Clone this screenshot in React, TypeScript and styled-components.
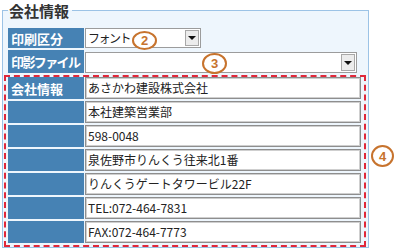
import styled, { createGlobalStyle } from "styled-components";

const colors = {
  frame: "#9cc3e6",
  frameBg: "#eef6fd",
  label: "#4682b4",
  box: "#9c9c9c",
  mark: "#c7732d",
  dash: "#e0283a",
  text: "#222",
};

const GlobalStyle = createGlobalStyle`
  html, body { margin: 0; padding: 0; background: #fff; }
  body { font-family: "Noto Sans CJK JP", "Noto Sans", sans-serif; }
`;

const Page = styled.div`
  display: flex;
  align-items: flex-start;
  width: 397px;
  height: 249px;
`;

const Frame = styled.fieldset`
  box-sizing: border-box;
  width: 367px;
  height: 246px;
  min-width: 0;
  margin: 2px 0 0 2px;
  padding: 9px 7px 0 5px;
  border: 1px solid ${colors.frame};
  background: ${colors.frameBg};
`;

const Legend = styled.legend`
  padding: 0 3px 0 1px;
  font: bold 15px/17px "Noto Sans CJK JP", sans-serif;
  color: #333;
`;

const Table = styled.div`
  display: flex;
  flex-direction: column;
  gap: 2px;
`;

const Row = styled.div<{ $h: number }>`
  display: flex;
  gap: 1px;
  height: ${(p) => p.$h}px;
`;

const Label = styled.div<{ $tight?: boolean }>`
  box-sizing: border-box;
  flex: none;
  width: 76px;
  display: flex;
  align-items: center;
  padding-left: 3px;
  background: ${colors.label};
  color: #fff;
  font: bold 13px/1 "Noto Sans CJK JP", sans-serif;
  white-space: nowrap;
  overflow: hidden;
  letter-spacing: ${(p) => (p.$tight ? "-1.6px" : "0")};
`;

const Value = styled.div<{ $align?: string }>`
  position: relative;
  flex: 1;
  display: flex;
  align-items: ${(p) => p.$align || "stretch"};
`;

const Select = styled.div<{ $w: number; $h: number }>`
  box-sizing: border-box;
  width: ${(p) => p.$w}px;
  height: ${(p) => p.$h}px;
  display: flex;
  align-items: center;
  padding: 0 1px 0 2px;
  background: #fff;
  border: 1px solid ${colors.box};
  font: 12px/1 "Noto Sans CJK JP", sans-serif;
  color: ${colors.text};
`;

const SelectText = styled.span`
  flex: 1;
  letter-spacing: -1.5px;
`;

const Arrow = styled.div`
  box-sizing: border-box;
  width: 14px;
  height: calc(100% - 2px);
  display: flex;
  align-items: center;
  justify-content: center;
  background: #ececec;
  border: 1px solid #a8a8a8;
  &::after {
    content: "";
    border-left: 4px solid transparent;
    border-right: 4px solid transparent;
    border-top: 4px solid #111;
  }
`;

const Group = styled.div`
  position: relative;
  display: flex;
  flex-direction: column;
  gap: 2px;
  margin-top: 2px;
  &::after {
    content: "";
    position: absolute;
    top: -2px;
    left: -4px;
    right: -5px;
    bottom: -4px;
    border: 2px dashed ${colors.dash};
    pointer-events: none;
  }
`;

const Input = styled.div`
  box-sizing: border-box;
  flex: 1;
  display: flex;
  align-items: center;
  padding-left: 2px;
  background: #fff;
  border: 1px solid #8e8e8e;
  box-shadow: inset 0 0 0 1px #cfcfcf;
  font: 12px/1 "Noto Sans CJK JP", sans-serif;
  color: ${colors.text};
  white-space: nowrap;
`;

const Mark = styled.div<{ $w: number; $h: number; $x?: number; $y?: number; $float?: boolean }>`
  box-sizing: border-box;
  width: ${(p) => p.$w}px;
  height: ${(p) => p.$h}px;
  display: flex;
  align-items: center;
  justify-content: center;
  border: 2px solid ${colors.mark};
  border-radius: 50%;
  background: #fff;
  color: ${colors.mark};
  font: bold 13px/1 "Liberation Sans", Arial, sans-serif;
  ${(p) =>
    p.$float
      ? `position: absolute; left: ${p.$x}px; top: ${p.$y}px;`
      : `flex: none; margin: 145px 0 0 2px;`}
`;

const company = [
  { label: "会社情報", value: "あさかわ建設株式会社" },
  { label: "", value: "本社建築営業部" },
  { label: "", value: "598-0048" },
  { label: "", value: "泉佐野市りんくう往来北1番" },
  { label: "", value: "りんくうゲートタワービル22F" },
  { label: "", value: "TEL:072-464-7831" },
  { label: "", value: "FAX:072-464-7773" },
];

export default function App() {
  return (
    <>
      <GlobalStyle />
      <Page>
        <Frame>
          <Legend>会社情報</Legend>
          <Table>
            <Row $h={20}>
              <Label>印刷区分</Label>
              <Value>
                <Select $w={116} $h={20}>
                  <SelectText>フォント</SelectText>
                  <Arrow />
                </Select>
                <Mark $w={25} $h={19} $x={47} $y={3} $float>2</Mark>
              </Value>
            </Row>
            <Row $h={23}>
              <Label $tight>印影ファイル</Label>
              <Value $align="flex-end">
                <Select $w={272} $h={21}>
                  <SelectText />
                  <Arrow />
                </Select>
                <Mark $w={25} $h={21} $x={117} $y={3} $float>3</Mark>
              </Value>
            </Row>
            <Group>
              {company.map((r, i) => (
                <Row $h={22} key={i}>
                  <Label>{r.label}</Label>
                  <Input>{r.value}</Input>
                </Row>
              ))}
            </Group>
          </Table>
        </Frame>
        <Mark $w={23} $h={22}>4</Mark>
      </Page>
    </>
  );
}
